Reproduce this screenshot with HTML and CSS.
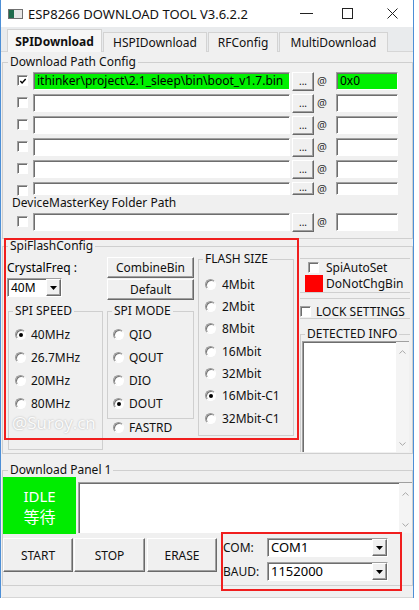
FILE: index.html
```html
<!DOCTYPE html>
<html>
<head>
<meta charset="utf-8">
<title>ESP8266 DOWNLOAD TOOL</title>
<link rel="stylesheet" href="styles.css">
</head>
<body>
<div class="window">
  <div class="titlebar">
    <svg class="app-icon" width="15" height="10" viewBox="0 0 15 10"><rect x="0.5" y="0.5" width="14" height="9" fill="#e6e6e6" stroke="#707070"/><rect x="1" y="1" width="5" height="8" fill="#1e6b4c"/></svg>
    <span class="title">ESP8266 DOWNLOAD TOOL V3.6.2.2</span>
    <div class="controls">
      <svg class="ctl-min" width="13" height="11" viewBox="0 0 13 11"><line x1="0" y1="5.5" x2="13" y2="5.5" stroke="#222" stroke-width="1"/></svg>
      <svg class="ctl-max" width="11" height="11" viewBox="0 0 11 11"><rect x="0.5" y="0.5" width="10" height="10" fill="none" stroke="#222" stroke-width="1"/></svg>
      <svg class="ctl-close" width="11" height="11" viewBox="0 0 11 11"><path d="M0.5 0.5 L10.5 10.5 M10.5 0.5 L0.5 10.5" stroke="#222" stroke-width="1"/></svg>
    </div>
  </div>

  <div class="tabs">
    <div class="tab active t1">SPIDownload</div>
    <div class="tab t2">HSPIDownload</div>
    <div class="tab t3">RFConfig</div>
    <div class="tab t4">MultiDownload</div>
  </div>

  <div class="page">
    <fieldset class="group path-group">
      <legend>Download Path Config</legend>
      <div class="path-rows">
        <div class="prow">
          <span class="cb"><svg width="9" height="9" viewBox="0 0 9 9"><path d="M1.5 4 L3.5 6.2 L7.5 1.8" fill="none" stroke="#000" stroke-width="1.6"/></svg></span>
          <div class="field path green"><span>ithinker\project\2.1_sleep\bin\boot_v1.7.bin</span></div>
          <div class="btn dots">...</div>
          <span class="at">@</span>
          <div class="field offset green">0x0</div>
        </div>
        <div class="prow">
          <span class="cb"></span>
          <div class="field path"></div>
          <div class="btn dots">...</div>
          <span class="at">@</span>
          <div class="field offset"></div>
        </div>
        <div class="prow">
          <span class="cb"></span>
          <div class="field path"></div>
          <div class="btn dots">...</div>
          <span class="at">@</span>
          <div class="field offset"></div>
        </div>
        <div class="prow">
          <span class="cb"></span>
          <div class="field path"></div>
          <div class="btn dots">...</div>
          <span class="at">@</span>
          <div class="field offset"></div>
        </div>
        <div class="prow">
          <span class="cb"></span>
          <div class="field path"></div>
          <div class="btn dots">...</div>
          <span class="at">@</span>
          <div class="field offset"></div>
        </div>
        <div class="prow clipped">
          <span class="cb"></span>
          <div class="field path"></div>
          <div class="btn dots">...</div>
          <span class="at">@</span>
          <div class="field offset"></div>
        </div>
        <div class="mk-label">DeviceMasterKey Folder Path</div>
        <div class="prow last">
          <span class="cb"></span>
          <div class="field path"></div>
          <div class="btn dots">...</div>
          <span class="at">@</span>
          <div class="field offset"></div>
        </div>
      </div>
    </fieldset>

    <fieldset class="group spi-group">
      <legend>SpiFlashConfig</legend>
      <div class="spi-body">
        <div class="col-left">
          <div class="lbl crystal">CrystalFreq :</div>
          <div class="combo crystal-combo"><span class="val">40M</span><span class="btn arrow"><svg width="7" height="4" viewBox="0 0 7 4"><path d="M0 0 H7 L3.5 4 Z" fill="#000"/></svg></span></div>
          <fieldset class="group sub speed">
            <legend>SPI SPEED</legend>
            <div class="radios speed-radios">
              <div class="radio-row"><span class="rb on"></span><span class="rt">40MHz</span></div>
              <div class="radio-row"><span class="rb"></span><span class="rt">26.7MHz</span></div>
              <div class="radio-row"><span class="rb"></span><span class="rt">20MHz</span></div>
              <div class="radio-row"><span class="rb"></span><span class="rt">80MHz</span></div>
            </div>
          </fieldset>
        </div>
        <div class="col-mid">
          <div class="btn wide combine">CombineBin</div>
          <div class="btn wide default">Default</div>
          <fieldset class="group sub mode">
            <legend>SPI MODE</legend>
            <div class="radios mode-radios">
              <div class="radio-row"><span class="rb"></span><span class="rt">QIO</span></div>
              <div class="radio-row"><span class="rb"></span><span class="rt">QOUT</span></div>
              <div class="radio-row"><span class="rb"></span><span class="rt">DIO</span></div>
              <div class="radio-row"><span class="rb on"></span><span class="rt">DOUT</span></div>
            </div>
          </fieldset>
          <div class="radio-row fastrd"><span class="rb"></span><span class="rt">FASTRD</span></div>
        </div>
        <div class="col-flash">
          <fieldset class="group sub flash">
            <legend>FLASH SIZE</legend>
            <div class="radios flash-radios">
              <div class="radio-row"><span class="rb"></span><span class="rt">4Mbit</span></div>
              <div class="radio-row"><span class="rb"></span><span class="rt">2Mbit</span></div>
              <div class="radio-row"><span class="rb"></span><span class="rt">8Mbit</span></div>
              <div class="radio-row"><span class="rb"></span><span class="rt">16Mbit</span></div>
              <div class="radio-row"><span class="rb"></span><span class="rt">32Mbit</span></div>
              <div class="radio-row"><span class="rb on"></span><span class="rt">16Mbit-C1</span></div>
              <div class="radio-row"><span class="rb"></span><span class="rt">32Mbit-C1</span></div>
            </div>
          </fieldset>
        </div>
        <div class="col-right">
          <div class="auto-box">
            <div class="chk-row r1"><span class="cb"></span><span class="ct">SpiAutoSet</span></div>
            <div class="chk-row r2"><span class="red-sq"></span><span class="ct">DoNotChgBin</span></div>
          </div>
          <div class="lock-box"><span class="cb"></span><span class="ct">LOCK SETTINGS</span></div>
          <fieldset class="group detect">
            <legend>DETECTED INFO</legend>
            <div class="textbox detect-box">
              <div class="tb-area"></div>
              <div class="sbar">
                <svg width="7" height="4" viewBox="0 0 7 4"><path d="M0.5 3.5 L3.5 0.7 L6.5 3.5" fill="none" stroke="#a8a8a8" stroke-width="1"/></svg>
                <svg width="7" height="4" viewBox="0 0 7 4"><path d="M0.5 0.5 L3.5 3.3 L6.5 0.5" fill="none" stroke="#a8a8a8" stroke-width="1"/></svg>
              </div>
            </div>
          </fieldset>
        </div>
      </div>
    </fieldset>

    <fieldset class="group dl-group">
      <legend>Download Panel 1</legend>
      <div class="dl-top">
        <div class="idle"><span>IDLE</span><span class="cjk">等待</span></div>
        <div class="textbox log">
          <div class="tb-area"></div>
          <div class="sbar">
            <svg width="7" height="4" viewBox="0 0 7 4"><path d="M0.5 3.5 L3.5 0.7 L6.5 3.5" fill="none" stroke="#a8a8a8" stroke-width="1"/></svg>
            <svg width="7" height="4" viewBox="0 0 7 4"><path d="M0.5 0.5 L3.5 3.3 L6.5 0.5" fill="none" stroke="#a8a8a8" stroke-width="1"/></svg>
          </div>
        </div>
      </div>
      <div class="dl-bottom">
        <div class="btn big b-start">START</div>
        <div class="btn big b-stop">STOP</div>
        <div class="btn big b-erase">ERASE</div>
        <div class="com-block">
          <div class="com-row"><span class="com-lbl">COM:</span><div class="combo com-combo"><span class="val">COM1</span><span class="btn arrow"><svg width="7" height="4" viewBox="0 0 7 4"><path d="M0 0 H7 L3.5 4 Z" fill="#000"/></svg></span></div></div>
          <div class="com-row"><span class="com-lbl">BAUD:</span><div class="combo com-combo"><span class="val">1152000</span><span class="btn arrow"><svg width="7" height="4" viewBox="0 0 7 4"><path d="M0 0 H7 L3.5 4 Z" fill="#000"/></svg></span></div></div>
        </div>
      </div>
    </fieldset>
    <div class="status"></div>
  </div>

  <div class="redbox rb-spi"></div>
  <div class="redbox rb-com"></div>
  <div class="watermark">@Suroy.cn</div>
</div>
</body>
</html>
```

FILE: styles.css
```css
* { box-sizing: border-box; }
html, body { margin: 0; padding: 0; background: #fff; }
body {
  font-family: "Noto Sans", "Open Sans", "DejaVu Sans", sans-serif;
  font-size: 12px;
  color: #000;
}

.window {
  position: relative;
  width: 414px;
  border-left: 1px solid #4d8fd6;
  border-right: 1px solid #4d8fd6;
  background: #f0f0f0;
}

/* title bar */
.titlebar {
  height: 27px;
  background: #fff;
  display: flex;
  align-items: center;
}
.app-icon { margin-left: 7px; flex: none; }
.title { margin-left: 5px; font-size: 13px; line-height: 16px; color: #111; }
.controls { margin-left: auto; display: flex; align-items: center; padding-right: 15px; }
.ctl-max { margin-left: 29px; }
.ctl-close { margin-left: 34px; }

/* tabs */
.tabs {
  height: 25px;
  display: flex;
  align-items: flex-end;
  padding-left: 6px;
  background: #e9ebed;
  border-bottom: 1px solid #d6d6d6;
}
.tab {
  height: 20px;
  margin-right: 1px;
  margin-bottom: -1px;
  border: 1px solid #d3d3d3;
  border-bottom: none;
  background: #f0f0f0;
  display: flex;
  align-items: center;
  justify-content: center;
  font-size: 12px;
  color: #111;
}
.tab.active { height: 23px; background: #f7f7f7; font-weight: bold; }
.t1 { width: 95px; }
.t2 { width: 104px; }
.t3 { width: 70px; }
.t4 { width: 109px; }

/* page */
.page { padding-left: 1px; padding-top: 3px; }

fieldset.group {
  margin: 0;
  padding: 0;
  min-width: 0;
  border: 1px solid #cfcfcf;
}
fieldset.group > legend {
  padding: 0 2px;
  margin-left: 5px;
  line-height: 14px;
  font-size: 12px;
  color: #111;
}

/* common controls */
.field {
  background: #fff;
  border-top: 1px solid #a0a0a0;
  border-left: 1px solid #a0a0a0;
  border-right: 1px solid #fff;
  border-bottom: 1px solid #fff;
  box-shadow: inset 1px 1px 0 #6e6e6e;
}
.field.green { background: #00f000; }
.btn {
  background: #f0f0f0;
  border: 1px solid;
  border-color: #fff #6a6a6a #6a6a6a #fff;
  box-shadow: inset -1px -1px 0 #a0a0a0;
  display: flex;
  align-items: center;
  justify-content: center;
  color: #111;
}
.cb {
  flex: none;
  width: 11px;
  height: 11px;
  background: #fff;
  border: 1px solid;
  border-color: #a0a0a0 #fff #fff #a0a0a0;
  box-shadow: inset 1px 1px 0 #6e6e6e;
  display: flex;
  align-items: center;
  justify-content: center;
}
.cb svg { margin: 1px 0 0 1px; }
.rb {
  flex: none;
  width: 11px;
  height: 11px;
  border-radius: 50%;
  background: #fff;
  border: 1px solid;
  border-color: #9a9a9a #fff #fff #9a9a9a;
  box-shadow: inset 1px 1px 0 #777;
  display: flex;
  align-items: center;
  justify-content: center;
}
.rb.on::after {
  content: "";
  width: 4px;
  height: 4px;
  border-radius: 50%;
  background: #000;
}
.combo {
  display: flex;
  align-items: stretch;
  height: 19px;
  background: #fff;
  border-top: 1px solid #a0a0a0;
  border-left: 1px solid #a0a0a0;
  border-right: 1px solid #fff;
  border-bottom: 1px solid #fff;
  box-shadow: inset 1px 1px 0 #6e6e6e;
}
.combo .val { flex: 1; padding-left: 3px; line-height: 17px; }
.combo .arrow { width: 15px; flex: none; }

/* path rows */
.path-rows { padding: 3px 0 3px 14px; }
.prow {
  display: flex;
  align-items: flex-start;
  height: 22px;
}
.prow .cb { margin-top: 3px; }
.prow .path {
  margin-left: 5px;
  width: 257px;
  height: 18px;
  overflow: hidden;
  white-space: nowrap;
  line-height: 16px;
  padding-left: 3px;
}
.prow .dots {
  margin-left: 2px;
  width: 22px;
  height: 19px;
  font-size: 10px;
  line-height: 10px;
  padding-bottom: 2px;
}
.prow .at { margin-left: 2px; width: 12px; text-align: center; line-height: 18px; color: #333; font-size: 11px; }
.prow .offset {
  margin-left: 8px;
  width: 62px;
  height: 18px;
  line-height: 16px;
  padding-left: 3px;
}
.prow.clipped { height: 13px; }
.prow.clipped .path,
.prow.clipped .offset { height: 13px; }
.prow.clipped .dots { height: 13px; padding-bottom: 3px; }
.prow.clipped .at { line-height: 13px; }
.mk-label { height: 16px; line-height: 16px; margin-left: -5px; color: #111; }
.prow.last { margin-top: 2px; height: 22px; }

/* spi config */
.spi-body { display: flex; height: 200px; }
.col-left { width: 104px; flex: none; }
.crystal { margin: 7px 0 0 4px; line-height: 16px; height: 16px; }
.crystal-combo { margin: 2px 0 0 4px; width: 55px; }
fieldset.sub.speed { margin: 7px 0 0 5px; width: 95px; }
fieldset.sub > legend { margin-left: 4px; }
.radios { display: flex; flex-direction: column; }
.speed-radios { height: 131px; padding: 5px 0 0 6px; }
.radio-row { display: flex; align-items: center; height: 23px; }
.rt { margin-left: 5px; color: #111; }

.col-mid { width: 87px; flex: none; }
.btn.wide { width: 87px; height: 21px; }
.combine { margin-top: 4px; }
.default { margin-top: 1px; }
fieldset.sub.mode { margin-top: 4px; width: 87px; }
.mode-radios { height: 100px; padding: 5px 0 0 5px; }
.radio-row.fastrd { height: 16px; margin-top: 0; padding-left: 6px; }

.col-flash { width: 96px; flex: none; margin-left: 4px; }
fieldset.sub.flash { width: 96px; }
fieldset.sub.flash > legend { line-height: 12px; }
.flash-radios { height: 170px; padding: 8px 0 0 6px; }
.flash-radios .radio-row { height: 22.33px; }
.flash-radios .rt { margin-left: 6px; }

.col-right { width: 110px; flex: none; margin-left: 6px; }
.auto-box {
  margin-top: 5px;
  border-top: 1px solid #cfcfcf;
  border-bottom: 1px solid #cfcfcf;
}
.chk-row { display: flex; align-items: center; }
.chk-row.r1 { height: 16px; padding-left: 8px; }
.chk-row.r1 .ct { margin-left: 7px; }
.chk-row.r2 { height: 17px; padding-left: 5px; }
.red-sq { width: 18px; height: 17px; background: #ff0000; flex: none; }
.chk-row.r2 .ct { margin-left: 3px; }
.ct { color: #111; white-space: nowrap; }
.lock-box {
  margin-top: 5px;
  height: 21px;
  border-top: 1px solid #cfcfcf;
  border-bottom: 1px solid #cfcfcf;
  display: flex;
  align-items: center;
  padding-top: 6px;
}
.lock-box .ct { margin-left: 5px; }
fieldset.group.detect { margin-top: 8px; border-bottom: none; border-right: none; }
fieldset.group.detect > legend { margin-left: 4px; }

.textbox {
  display: flex;
  background: #fff;
  border-top: 1px solid #a0a0a0;
  border-left: 1px solid #a0a0a0;
  box-shadow: inset 1px 1px 0 #6e6e6e;
}
.tb-area { flex: 1; }
.sbar {
  width: 13px;
  background: #f4f4f4;
  display: flex;
  flex-direction: column;
  align-items: center;
  justify-content: space-between;
  padding: 8px 0 6px;
}
.detect-box { margin-left: 1px; height: 111px; margin-right: 1px; }

/* download panel */
fieldset.group.dl-group { margin-top: 9px; }
.dl-top { display: flex; height: 57px; }
.idle {
  width: 73px;
  height: 57px;
  background: #00ec00;
  color: #fff;
  display: flex;
  flex-direction: column;
  align-items: center;
  justify-content: center;
  font-size: 15px;
  line-height: 20px;
}
.idle .cjk { font-family: "Noto Sans CJK SC", sans-serif; font-size: 16px; }
.textbox.log { margin: 5px 0 0 2px; height: 51px; flex: 1; }
.log .sbar { padding: 9px 0 6px; }

.dl-bottom { display: flex; height: 51px; }
.btn.big { margin-top: 4px; height: 34px; }
.b-start { width: 70px; }
.b-stop { width: 71px; margin-left: 1px; }
.b-erase { width: 70px; margin-left: 2px; }
.com-block { margin-left: 6px; padding-top: 4px; }
.com-row { display: flex; align-items: center; height: 19px; margin-bottom: 5px; }
.com-lbl { width: 44px; color: #111; }
.com-combo { width: 121px; }
.com-combo .val { font-size: 13px; }

.status {
  height: 12px;
  border-bottom: 1px solid #d6d6d6;
}

/* overlays (annotation marks drawn over the UI) */
.redbox {
  position: absolute;
  border: 2px solid #f01e1e;
  pointer-events: none;
}
.rb-spi { left: 3px; top: 238px; width: 295px; height: 202px; }
.rb-com { left: 220px; top: 532px; width: 181px; height: 59px; }
.watermark {
  position: absolute;
  left: 11px;
  top: 414px;
  line-height: 17px;
  font-family: "Open Sans", "Noto Sans", sans-serif;
  font-size: 17px;
  color: rgba(255, 255, 255, 0.95);
  text-shadow: 0 0 2px rgba(0, 0, 0, 0.28);
}
```
